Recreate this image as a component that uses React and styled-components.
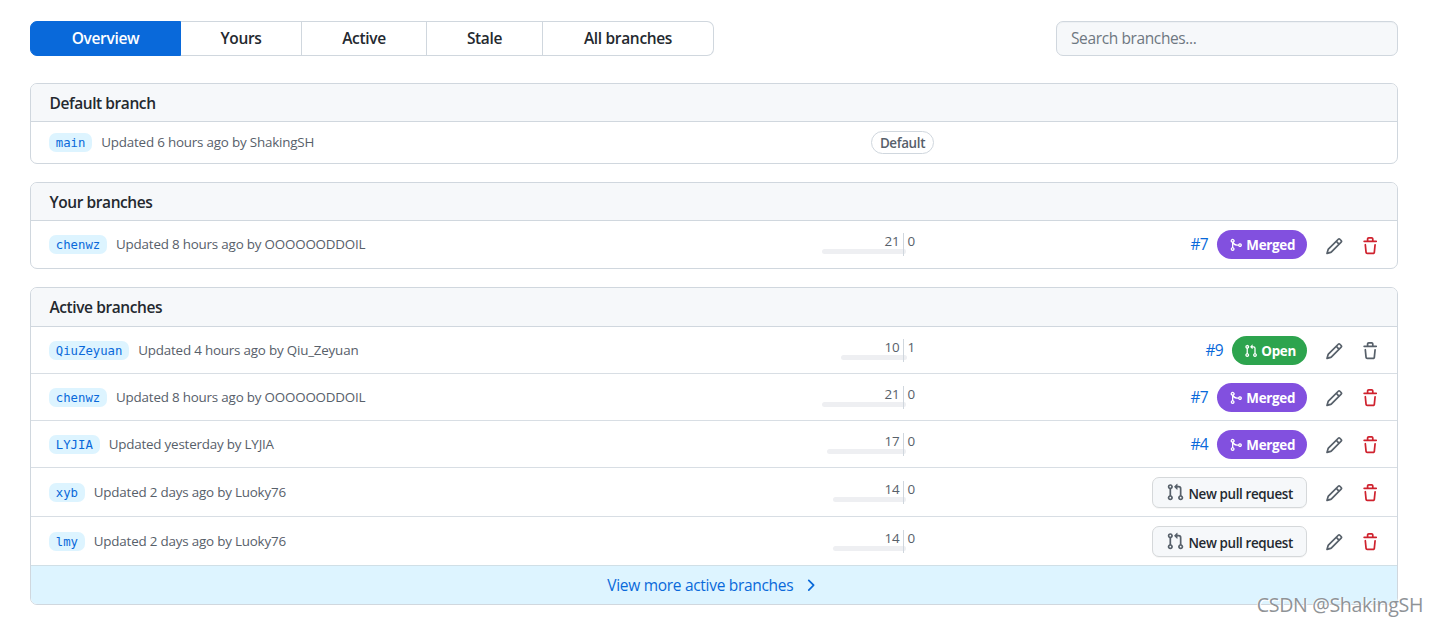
import styled, { createGlobalStyle } from 'styled-components';

const GlobalStyle = createGlobalStyle`
  * {
    box-sizing: border-box;
  }
  body {
    margin: 0;
    background: #fff;
    color: #24292f;
    font-family: "Open Sans", "Noto Sans", sans-serif;
    font-size: 15.5px;
    overflow: hidden;
  }
`;

const Page = styled.main`
  height: 626px;
  padding: 21px 40px 0 30px;
`;

const TopBar = styled.div`
  display: flex;
  justify-content: space-between;
  margin-bottom: 27px;
`;

const Tabs = styled.nav`
  display: flex;
  height: 35px;
`;

const Tab = styled.a`
  display: flex;
  align-items: center;
  justify-content: center;
  width: ${props => props.$width}px;
  border: 1px solid ${props => props.$selected ? '#0969da' : '#d0d7de'};
  border-left-width: ${props => props.$selected ? 1 : 0}px;
  background: ${props => props.$selected ? '#0969da' : '#fff'};
  color: ${props => props.$selected ? '#fff' : '#24292f'};
  font-weight: 600;
  letter-spacing: -0.33px;
  line-height: 33px;
  cursor: pointer;
  &:first-child {
    border-radius: 7px 0 0 7px;
  }
  &:last-child {
    border-radius: 0 7px 7px 0;
  }
`;

const Search = styled.input`
  width: 342px;
  height: 35px;
  padding: 0 14px 2px;
  border: 1px solid #d0d7de;
  border-radius: 7px;
  background: #f6f8fa;
  box-shadow: inset 0 1px 0 rgba(208, 215, 222, 0.2);
  font: inherit;
  letter-spacing: -0.38px;
  outline: none;
  &::placeholder {
    color: #6e7781;
    opacity: 1;
  }
`;

const Box = styled.section`
  border: 1px solid #d0d7de;
  border-radius: 7px;
  margin-bottom: 18px;
  overflow: hidden;
`;

const BoxTitle = styled.h2`
  height: ${props => props.$height}px;
  margin: 0;
  padding: 0 18.5px;
  border-bottom: 1px solid #d0d7de;
  background: #f6f8fa;
  font-size: 15.5px;
  font-weight: 600;
  letter-spacing: -0.42px;
  line-height: 38px;
`;

const Row = styled.div`
  display: grid;
  grid-template-columns: 751px 168px 1fr;
  align-items: center;
  height: ${props => props.$height}px;
  padding: 0 18px;
  & + & {
    border-top: 1px solid #d8dee4;
  }
`;

const Info = styled.div`
  display: flex;
  align-items: center;
  gap: 9px;
`;

const BranchName = styled.a`
  height: 19px;
  padding: 0 6.8px;
  border-radius: 7px;
  background: #ddf4ff;
  color: #0969da;
  font-family: "DejaVu Sans Mono", "Liberation Mono", monospace;
  font-size: 12.3px;
  line-height: 20px;
`;

const Updated = styled.span`
  margin-bottom: 1px;
  color: #57606a;
  font-size: 13.4px;
  letter-spacing: -0.2px;
  line-height: 20px;
`;

const DefaultLabel = styled.span`
  display: flex;
  align-items: center;
  justify-content: center;
  width: 63px;
  height: 23px;
  margin-left: 71px;
  border: 1px solid #d0d7de;
  border-radius: 23px;
  color: #57606a;
  font-size: 13.4px;
  font-weight: 600;
  letter-spacing: -0.35px;
`;

const Divergence = styled.div`
  display: grid;
  grid-template-columns: 104px 1fr;
  height: 23px;
`;

const Side = styled.div`
  display: flex;
  flex-direction: column;
  align-items: ${props => props.$behind ? 'flex-end' : 'flex-start'};
  border-right: ${props => props.$behind ? '1px solid #d0d7de' : 'none'};
`;

const Count = styled.span`
  height: 16px;
  padding: 0 3.5px;
  color: #57606a;
  font-size: 13.4px;
  letter-spacing: -0.1px;
  line-height: 17px;
`;

const Meter = styled.span`
  width: ${props => props.$width}px;
  height: 5px;
  border-radius: ${props => props.$behind ? '3px 0 0 3px' : '0 3px 3px 0'};
  background: #eeeff2;
`;

const Actions = styled.div`
  display: flex;
  align-items: center;
  justify-content: flex-end;
`;

const PullNumber = styled.a`
  margin: 0 9px 1px 0;
  color: #0969da;
  letter-spacing: -0.7px;
`;

const State = styled.span`
  display: flex;
  align-items: center;
  gap: 3.5px;
  width: ${props => props.$merged ? 90 : 75}px;
  height: 29px;
  padding: 1px 0 0 12px;
  border-radius: 29px;
  background: ${props => props.$merged ? '#8250df' : '#2da44e'};
  color: #fff;
  font-size: 13.4px;
  font-weight: 700;
  letter-spacing: -0.3px;
`;

const NewPull = styled.button`
  display: flex;
  align-items: center;
  gap: 4px;
  width: 155px;
  height: 31px;
  padding: 0 13px;
  border: 1px solid #d5d8da;
  border-radius: 7px;
  background: #f6f8fa;
  box-shadow: 0 1px 0 rgba(27, 31, 36, 0.04);
  color: #24292f;
  font: 600 13.4px "Open Sans", sans-serif;
  letter-spacing: -0.36px;
  white-space: nowrap;
`;

const NewPullText = styled.span`
  padding-top: 3px;
`;

const Icon = styled.svg`
  flex: none;
  width: ${props => props.$size || 18.4}px;
  height: ${props => props.$size || 18.4}px;
  fill: ${props => props.$color || 'currentColor'};
`;

const IconButton = styled.a`
  display: flex;
  margin: 3px 0 0 17.6px;
`;

const ViewMore = styled.a`
  display: flex;
  align-items: center;
  justify-content: center;
  gap: 8px;
  height: 39px;
  padding-right: 1px;
  border-top: 1px solid #d0dfe6;
  background: #ddf4ff;
  color: #0969da;
  letter-spacing: -0.3px;
`;

const Watermark = styled.div`
  position: absolute;
  right: 15px;
  bottom: 6px;
  color: #8f9397;
  font-size: 19.6px;
  line-height: 30px;
  letter-spacing: -0.35px;
  text-shadow: 1px 1px 0 #fff, -1px 0 0 rgba(255, 255, 255, 0.7);
`;

const paths = {
  pull: 'M7.177 3.073L9.573.677A.25.25 0 0110 .854v4.792a.25.25 0 01-.427.177L7.177 3.427a.25.25 0 010-.354zM3.75 2.5a.75.75 0 100 1.5.75.75 0 000-1.5zm-2.25.75a2.25 2.25 0 113 2.122v5.256a2.251 2.251 0 11-1.5 0V5.372A2.25 2.25 0 011.5 3.25zM11 2.5h-1V4h1a1 1 0 011 1v5.628a2.251 2.251 0 101.5 0V5A2.5 2.5 0 0011 2.5zm1 10.25a.75.75 0 111.5 0 .75.75 0 01-1.5 0zM3.75 12a.75.75 0 100 1.5.75.75 0 000-1.5z',
  merge: 'M5 3.254V3.25v.005a.75.75 0 110-.005v.004zm.45 1.9a2.25 2.25 0 10-1.95.218v5.256a2.25 2.25 0 101.5 0V7.123A5.735 5.735 0 009.25 9h1.378a2.251 2.251 0 100-1.5H9.25a5.734 5.734 0 01-3.8-2.346zM12.75 9a.75.75 0 100-1.5.75.75 0 000 1.5zm-8.5 4.5a.75.75 0 100-1.5.75.75 0 000 1.5z',
  pencil: 'M11.013 1.427a1.75 1.75 0 012.474 0l1.086 1.086a1.75 1.75 0 010 2.474l-8.61 8.61c-.21.21-.47.364-.756.445l-3.251.93a.75.75 0 01-.927-.928l.929-3.25a1.75 1.75 0 01.445-.758l8.61-8.61zm1.414 1.06a.25.25 0 00-.354 0L10.811 3.75l1.439 1.44 1.263-1.263a.25.25 0 000-.354l-1.086-1.086zM11.189 6.25L9.75 4.81l-6.286 6.287a.25.25 0 00-.064.108l-.558 1.953 1.953-.558a.249.249 0 00.108-.064l6.286-6.286z',
  trash: 'M6.5 1.75a.25.25 0 01.25-.25h2.5a.25.25 0 01.25.25V3h-3V1.75zm4.5 0V3h2.25a.75.75 0 010 1.5H2.75a.75.75 0 010-1.5H5V1.75C5 .784 5.784 0 6.75 0h2.5C10.216 0 11 .784 11 1.75zM4.496 6.675a.75.75 0 10-1.492.15l.66 6.6A1.75 1.75 0 005.405 15h5.19c.9 0 1.652-.681 1.741-1.576l.66-6.6a.75.75 0 00-1.492-.149l-.66 6.6a.25.25 0 01-.249.225h-5.19a.25.25 0 01-.249-.225l-.66-6.6z',
  chevron: 'M6.22 3.22a.75.75 0 011.06 0l4.25 4.25a.75.75 0 010 1.06l-4.25 4.25a.75.75 0 01-1.06-1.06L9.94 8 6.22 4.28a.75.75 0 010-1.06z',
};

const tabs = [
  { label: 'Overview', width: 151 },
  { label: 'Yours', width: 121 },
  { label: 'Active', width: 125 },
  { label: 'Stale', width: 116 },
  { label: 'All branches', width: 171 },
];

const chenwz = { name: 'chenwz', updated: '8 hours ago by OOOOOODDOIL', behind: 21, ahead: 0, bar: 81, pull: 7, merged: true, height: 47 };

const active = [
  { name: 'QiuZeyuan', updated: '4 hours ago by Qiu_Zeyuan', behind: 10, ahead: 1, bar: 62, pull: 9, height: 46 },
  chenwz,
  { name: 'LYJIA', updated: 'yesterday by LYJIA', behind: 17, ahead: 0, bar: 76, pull: 4, merged: true, height: 47 },
  { name: 'xyb', updated: '2 days ago by Luoky76', behind: 14, ahead: 0, bar: 70, height: 49 },
  { name: 'lmy', updated: '2 days ago by Luoky76', behind: 14, ahead: 0, bar: 70, height: 49 },
];

function Octicon({ name, size, color }) {
  return <Icon viewBox="0 0 16 16" $size={size} $color={color}>
    <path fillRule="evenodd" d={paths[name]} />
  </Icon>;
}

function Branch({ branch }) {
  const { name, updated, behind, ahead, bar, pull, merged, height } = branch;

  return <Row $height={height}>
    <Info>
      <BranchName>{name}</BranchName>
      <Updated>Updated {updated}</Updated>
    </Info>
    <Divergence>
      <Side $behind>
        <Count>{behind}</Count>
        <Meter $behind $width={bar} />
      </Side>
      <Side>
        <Count>{ahead}</Count>
        <Meter $width={ahead ? 3 : 2} />
      </Side>
    </Divergence>
    <Actions>
      {pull && <PullNumber>#{pull}</PullNumber>}
      {pull && <State $merged={merged}>
        <Octicon name={merged ? 'merge' : 'pull'} size={13.8} />
        {merged ? 'Merged' : 'Open'}
      </State>}
      {!pull && <NewPull>
        <Octicon name="pull" color="#57606a" />
        <NewPullText>New pull request</NewPullText>
      </NewPull>}
      <IconButton><Octicon name="pencil" color="#57606a" /></IconButton>
      <IconButton><Octicon name="trash" color={pull && !merged ? '#57606a' : '#cf222e'} /></IconButton>
    </Actions>
  </Row>;
}

function App() {
  return <Page>
    <GlobalStyle />
    <TopBar>
      <Tabs>
        {tabs.map((tab, i) => <Tab key={tab.label} $width={tab.width} $selected={i === 0}>{tab.label}</Tab>)}
      </Tabs>
      <Search placeholder="Search branches..." />
    </TopBar>

    <Box>
      <BoxTitle $height={38}>Default branch</BoxTitle>
      <Row $height={41}>
        <Info>
          <BranchName>main</BranchName>
          <Updated>Updated 6 hours ago by ShakingSH</Updated>
        </Info>
        <DefaultLabel>Default</DefaultLabel>
      </Row>
    </Box>

    <Box>
      <BoxTitle $height={38}>Your branches</BoxTitle>
      <Branch branch={chenwz} />
    </Box>

    <Box>
      <BoxTitle $height={39}>Active branches</BoxTitle>
      {active.map(branch => <Branch key={branch.name} branch={branch} />)}
      <ViewMore>
        View more active branches
        <Octicon name="chevron" />
      </ViewMore>
    </Box>

    <Watermark>CSDN @ShakingSH</Watermark>
  </Page>;
}

export default App;
